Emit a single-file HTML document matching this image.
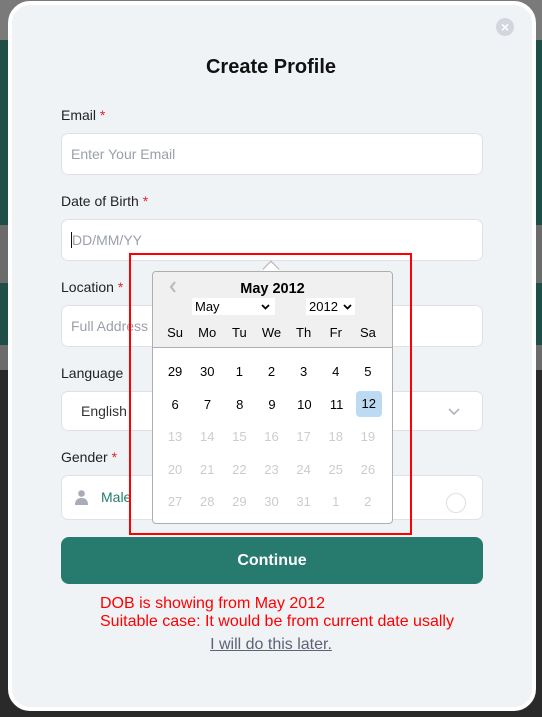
<!DOCTYPE html>
<html><head><style>
*{box-sizing:border-box;margin:0;padding:0}
body{width:542px;height:717px;overflow:hidden;background:#6b6b6b;font-family:"Liberation Sans",sans-serif;position:relative}
.bg{position:absolute}
.modal{position:absolute;left:8px;top:1px;width:528px;height:710px;background:#f0f3f6;border:4px solid #fff;border-radius:22px}
.abs{position:absolute}
.lbl{position:absolute;left:61px;font-size:14px;color:#222}
.lbl b{color:#e02424;font-weight:normal}
.inp{position:absolute;left:61px;width:422px;background:#fff;border:1px solid #dde2ea;border-radius:7px;font-size:14px;color:#9aa0ab;padding-left:9px}
.cal{position:absolute;left:152px;top:271px;width:241px;height:253px;background:#fff;border:1px solid #aeaeae;border-radius:4px;overflow:hidden;font-size:13px}
.ch{height:76px;background:#f0f0f0;border-bottom:1px solid #aeaeae;position:relative}
.row{position:absolute;left:6px;width:225px;display:flex}
.row span{width:32.3px;text-align:center}
.g{color:#ccc}
</style></head><body>
<div class="bg" style="left:0;top:0;width:542px;height:40px;background:#7a7a7a"></div>
<div class="bg" style="left:0;top:40px;width:542px;height:185px;background:#1f4e48"></div>
<div class="bg" style="left:0;top:283px;width:542px;height:62px;background:#1f4e48"></div>
<div class="bg" style="left:0;top:370px;width:542px;height:347px;background:#2a2a2a"></div>
<div class="modal"></div>
<div class="abs" style="left:496px;top:18px;width:18px;height:18px;border-radius:50%;background:#d3d6dc;color:#fff;font-size:14px;line-height:18px;text-align:center;font-weight:bold">×</div>
<div class="abs" style="left:0;top:56px;width:542px;text-align:center;font-size:20px;font-weight:bold;color:#111">Create Profile</div>
<div class="lbl" style="top:107px">Email <b>*</b></div>
<div class="inp" style="top:133px;height:42px;line-height:40px">Enter Your Email</div>
<div class="lbl" style="top:193px">Date of Birth <b>*</b></div>
<div class="inp" style="top:219px;height:42px;line-height:40px"><span style="border-left:1px solid #111"></span>DD/MM/YY</div>
<div class="lbl" style="top:279px">Location <b>*</b></div>
<div class="inp" style="top:305px;height:42px;line-height:40px">Full Address</div>
<div class="lbl" style="top:365px">Language</div>
<div class="inp" style="top:391px;height:40px;line-height:38px;color:#333;padding-left:19px">English<svg style="position:absolute;right:22px;top:16px" width="12" height="8"><path d="M1 1 L6 6 L11 1" stroke="#b0b4bc" stroke-width="1.6" fill="none"/></svg></div>
<div class="lbl" style="top:449px">Gender <b>*</b></div>
<div class="inp" style="top:475px;height:45px;line-height:43px;color:#267a6e;padding-left:39px">Male
<svg style="position:absolute;left:13px;top:14px" width="13" height="15"><circle cx="6.5" cy="3.5" r="3.3" fill="#a8abb8"/><path d="M0 15 Q0 8 6.5 8 Q13 8 13 15Z" fill="#a8abb8"/></svg>
<span style="position:absolute;right:16px;top:17px;width:20px;height:20px;border:1.5px solid #dcdfe4;border-radius:50%"></span></div>
<div class="abs" style="left:61px;top:537px;width:422px;height:47px;background:#267a6e;border-radius:8px;color:#fff;font-weight:bold;font-size:16px;text-align:center;line-height:47px">Continue</div>
<div class="abs" style="left:100px;top:595px;color:#ff0000;font-size:16px;line-height:18px">DOB is showing from May 2012<br>Suitable case: It would be from current date usally</div>
<div class="abs" style="left:0;top:636px;width:542px;text-align:center;font-size:16px;color:#5f6275;text-decoration:underline">I will do this later.</div>
<div class="abs" style="left:265px;top:263px;width:12px;height:12px;background:#fff;border-left:1px solid #aeaeae;border-top:1px solid #aeaeae;transform:rotate(45deg);z-index:0"></div>
<div class="cal">
<div class="ch">
<svg class="abs" style="left:16px;top:9px" width="8" height="12"><path d="M6 1 L2 6 L6 11" stroke="#bbb" stroke-width="2.2" fill="none"/></svg>
<div class="abs" style="left:0;top:9px;width:239px;text-align:center;font-weight:bold;font-size:14.5px">May 2012</div>
<div class="abs" style="left:39px;top:26px;width:83px;height:17px;background:#fff;font-size:13px;padding-left:3px;line-height:17px">May<svg style="position:absolute;right:5px;top:6px" width="9" height="6"><path d="M1 1 L4.5 4.5 L8 1" stroke="#000" stroke-width="1.8" fill="none"/></svg></div>
<div class="abs" style="left:153px;top:26px;width:49px;height:17px;background:#fff;font-size:13px;padding-left:3px;line-height:17px">2012<svg style="position:absolute;right:3px;top:6px" width="9" height="6"><path d="M1 1 L4.5 4.5 L8 1" stroke="#000" stroke-width="1.8" fill="none"/></svg></div>
<div class="row" style="top:53px"><span>Su</span><span>Mo</span><span>Tu</span><span>We</span><span>Th</span><span>Fr</span><span>Sa</span></div>
</div>
<div class="row" style="top:92px"><span>29</span><span>30</span><span>1</span><span>2</span><span>3</span><span>4</span><span>5</span></div>
<div class="row" style="top:125px"><span>6</span><span>7</span><span>8</span><span>9</span><span>10</span><span>11</span><span style="background:#bcdaf1;border-radius:4px;height:26px;line-height:26px;margin-top:-6px;width:26px;margin-left:3px">12</span></div>
<div class="row g" style="top:157px"><span>13</span><span>14</span><span>15</span><span>16</span><span>17</span><span>18</span><span>19</span></div>
<div class="row g" style="top:190px"><span>20</span><span>21</span><span>22</span><span>23</span><span>24</span><span>25</span><span>26</span></div>
<div class="row g" style="top:222px"><span>27</span><span>28</span><span>29</span><span>30</span><span>31</span><span>1</span><span>2</span></div>
</div>
<div class="abs" style="left:129px;top:253px;width:283px;height:282px;border:2.5px solid #ff0000"></div>
</body></html>
